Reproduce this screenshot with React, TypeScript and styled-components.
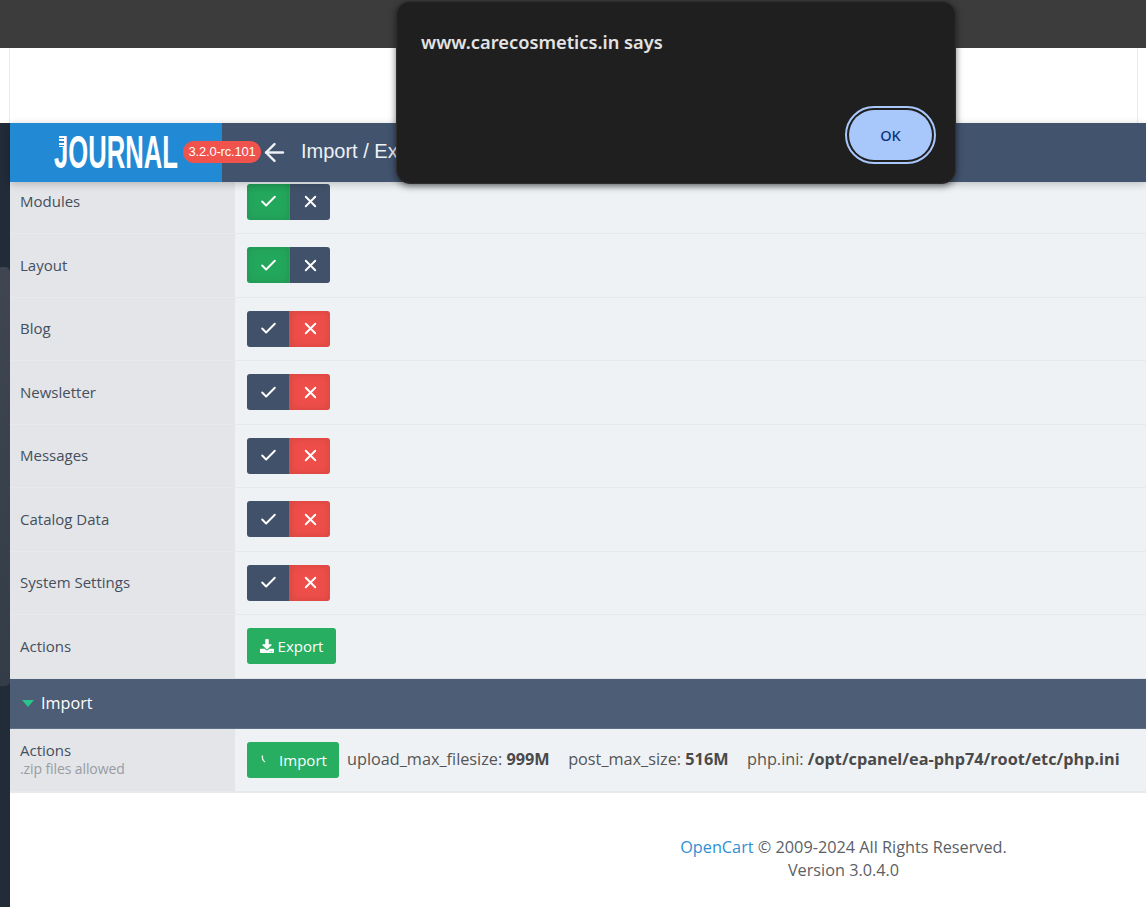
import React from "react";
import styled, { createGlobalStyle } from "styled-components";
import { ArrowLeft, Check, X } from "lucide-react";
import { FaDownload } from "react-icons/fa";

const GlobalStyle = createGlobalStyle`
  html, body {
    margin: 0;
    padding: 0;
    height: 100%;
    background: #fff;
    overflow: hidden;
  }
  body {
    font-family: "Open Sans", "Noto Sans", sans-serif;
    font-size: 15px;
    color: #4a5568;
  }
`;

const Page = styled.div`
  position: relative;
  width: 1146px;
  height: 907px;
  overflow: hidden;
`;

const TopBar = styled.div`
  height: 48px;
  background: #3c3c3c;
`;

const Body = styled.div`
  display: flex;
  height: 859px;
`;

const LeftRail = styled.div`
  position: relative;
  width: 10px;
  flex: none;
  margin-top: 75px;
  background: #222b38;
`;

const RailThumb = styled.div`
  position: absolute;
  top: 144px;
  left: 0;
  width: 10px;
  height: 419px;
  border-radius: 0 5px 5px 0;
  background: linear-gradient(#3f4651, #343c48);
`;

const Main = styled.div`
  flex: 1;
  min-width: 0;
`;

const WhiteBand = styled.div`
  height: 75px;
  margin-left: -1px;
  background: #fff;
  border-left: 1px solid #ececec;
  position: relative;

  &::after {
    content: "";
    position: absolute;
    top: 0;
    right: 8px;
    width: 1px;
    height: 100%;
    background: #ececec;
  }
`;

const Header = styled.header`
  position: relative;
  z-index: 2;
  display: flex;
  align-items: center;
  height: 59px;
  background: #42536d;
  box-shadow: 0 2px 8px rgba(0, 0, 0, 0.22);
`;

const LogoBox = styled.div`
  position: relative;
  width: 212px;
  height: 100%;
  flex: none;
  background: #228ad4;

  /* the striped top of the J in the logo */
  &::before {
    content: "";
    position: absolute;
    z-index: 1;
    left: 49px;
    top: 13px;
    width: 5px;
    height: 11px;
    background: repeating-linear-gradient(
      #fff 0 2px,
      #228ad4 2px 3.5px
    );
  }
`;

const LogoText = styled.div`
  position: absolute;
  left: 44px;
  top: 5px;
  font-family: "Liberation Sans", Arial, sans-serif;
  font-weight: 700;
  font-size: 47px;
  line-height: 48px;
  color: #fff;
  transform: scaleX(0.545);
  transform-origin: left center;
  white-space: nowrap;
`;

const VersionBadge = styled.span`
  position: absolute;
  left: 173px;
  top: 18px;
  width: 78px;
  height: 22px;
  border-radius: 11px;
  background: #f0524c;
  color: #fff;
  font-family: "Liberation Sans", Arial, sans-serif;
  font-size: 13px;
  line-height: 22px;
  text-align: center;
  letter-spacing: -0.2px;
  z-index: 1;
`;

const BackLink = styled.span`
  display: flex;
  margin-left: 38px;
  margin-right: 1px;
  margin-top: -1px;
  color: #eef1f5;
`;

const Title = styled.h1`
  margin: -2px 0 0 11px;
  font-family: "Liberation Sans", Arial, sans-serif;
  font-weight: 400;
  font-size: 20px;
  color: #eef1f5;
`;

const Rows = styled.div`
  margin-top: -11.5px;
`;

const Row = styled.div<{ $last?: boolean }>`
  display: flex;
  height: ${(p) => (p.$last ? "64px" : "63.5px")};
  box-sizing: border-box;
  border-bottom: ${(p) => (p.$last ? "2px" : "1px")} solid #e7e9ec;
`;

const LabelCell = styled.div`
  width: 225px;
  flex: none;
  box-sizing: border-box;
  padding: 0 0 1px 10px;
  display: flex;
  flex-direction: column;
  justify-content: center;
  background: #e3e5e8;
  color: #454f5e;
`;

const SmallNote = styled.span`
  font-size: 14px;
  line-height: 18px;
  letter-spacing: -0.1px;
  color: #989ca3;
`;

const LabelMain = styled.span`
  line-height: 20px;
`;

const ValueCell = styled.div`
  flex: 1;
  display: flex;
  align-items: center;
  gap: 8px;
  padding-left: 12px;
  background: #eff2f5;
  white-space: nowrap;
`;

const Toggle = styled.div`
  display: flex;
  width: 83px;
  height: 36px;
  border-radius: 3px;
  overflow: hidden;
`;

const ToggleSide = styled.span<{ $tone: "green" | "red" | "navy"; $first?: boolean }>`
  display: flex;
  align-items: center;
  justify-content: center;
  color: #fff;
  width: ${(p) => (p.$first ? "43px" : "40px")};
  box-sizing: border-box;
  border-right: ${(p) => (p.$first ? "1px solid #6b7684" : "none")};
  background: ${(p) =>
    p.$tone === "green" ? "#23a75c" : p.$tone === "red" ? "#ee4e49" : "#405169"};
  box-shadow: ${(p) =>
    p.$tone === "navy" ? "none" : "inset 0 0 8px rgba(0, 0, 0, 0.12)"};
`;

const ActionButton = styled.button<{ $width: number }>`
  display: flex;
  align-items: center;
  justify-content: center;
  gap: 4px;
  width: ${(p) => p.$width}px;
  height: 36px;
  padding: 0;
  border: 0;
  border-radius: 3px;
  background: #27ae60;
  color: #fff;
  font: inherit;
  font-size: 15px;
`;

const ButtonLabel = styled.span`
  margin-left: 2px;
`;

const Limits = styled.div`
  display: flex;
  gap: 18.5px;
  margin-top: -1px;
  color: #555;
  font-size: 16.25px;

  b {
    font-weight: 700;
    color: #4a4a4a;
  }
`;

const SectionHeader = styled.div`
  display: flex;
  align-items: center;
  gap: 7px;
  height: 50.5px;
  margin-top: -0.5px;
  box-sizing: border-box;
  padding-left: 12px;
  background: #4c5d75;
  border-top: 1px solid #dfe2e6;
  border-bottom: 1px solid #5f6f85;
  color: #fff;
  font-size: 16.2px;
`;

const Caret = styled.span`
  width: 0;
  height: 0;
  border-left: 6px solid transparent;
  border-right: 6px solid transparent;
  border-top: 7px solid #2bc48a;
`;

const Footer = styled.footer`
  margin-top: 43.5px;
  padding-left: 531px;
  text-align: center;
  font-size: 16.25px;
  line-height: 23px;
  color: #5b5f66;

  a {
    color: #2f8fd3;
    text-decoration: none;
  }
`;

const Dialog = styled.div`
  position: absolute;
  z-index: 5;
  left: 396px;
  top: 1px;
  width: 560px;
  height: 183px;
  box-sizing: border-box;
  padding: 27px 24px 0;
  display: flex;
  flex-direction: column;
  border: 1px solid #2e2e2e;
  border-radius: 14px;
  background: #1f1f1f;
  box-shadow: 0 2px 7px rgba(0, 0, 0, 0.55);
`;

const DialogTitle = styled.div`
  font-family: "Noto Sans", "Open Sans", sans-serif;
  font-weight: 600;
  font-size: 18.3px;
  line-height: 26px;
  color: #e3e3e3;
`;

const DialogActions = styled.div`
  margin-top: auto;
  margin-bottom: 23px;
  display: flex;
  justify-content: flex-end;
`;

const OkButton = styled.button`
  width: 83px;
  height: 50px;
  margin-right: -1px;
  border: 0;
  border-radius: 25px;
  background: #a8c7fa;
  color: #0a3580;
  font-family: "Noto Sans", "Open Sans", sans-serif;
  font-weight: 500;
  font-size: 14.5px;
  outline: 2px solid #a8c7fa;
  outline-offset: 2px;
`;

const rows: { name: string; on: boolean }[] = [
  { name: "Modules", on: true },
  { name: "Layout", on: true },
  { name: "Blog", on: false },
  { name: "Newsletter", on: false },
  { name: "Messages", on: false },
  { name: "Catalog Data", on: false },
  { name: "System Settings", on: false },
];

const App = () => {
  return (
    <Page>
      <GlobalStyle />
      <TopBar />
      <Body>
        <LeftRail>
          <RailThumb />
        </LeftRail>
        <Main>
          <WhiteBand />
          <Header>
            <LogoBox>
              <LogoText>JOURNAL</LogoText>
              <VersionBadge>3.2.0-rc.101</VersionBadge>
            </LogoBox>
            <BackLink>
              <ArrowLeft size={29} strokeWidth={2} />
            </BackLink>
            <Title>Import / Export</Title>
          </Header>
          <Rows>
            {rows.map((row) => (
              <Row key={row.name}>
                <LabelCell>
                  <LabelMain>{row.name}</LabelMain>
                </LabelCell>
                <ValueCell>
                  <Toggle>
                    <ToggleSide $first $tone={row.on ? "green" : "navy"}>
                      <Check size={19} strokeWidth={2.4} />
                    </ToggleSide>
                    <ToggleSide $tone={row.on ? "navy" : "red"}>
                      <X size={19} strokeWidth={2.4} />
                    </ToggleSide>
                  </Toggle>
                </ValueCell>
              </Row>
            ))}
            <Row>
              <LabelCell>
                <LabelMain>Actions</LabelMain>
              </LabelCell>
              <ValueCell>
                <ActionButton $width={89}>
                  <FaDownload size={14} />
                  Export
                </ActionButton>
              </ValueCell>
            </Row>
          </Rows>
          <SectionHeader>
            <Caret />
            Import
          </SectionHeader>
          <Row $last>
            <LabelCell>
              <LabelMain>Actions</LabelMain>
              <SmallNote>.zip files allowed</SmallNote>
            </LabelCell>
            <ValueCell>
              <ActionButton $width={92}>
                <svg width="14" height="14" viewBox="0 0 14 14" fill="none">
                  <path
                    d="M3.5 2.5 C3 5 3.8 7.5 6 9"
                    stroke="#e8f6ee"
                    strokeWidth="1.4"
                  />
                </svg>
                <ButtonLabel>Import</ButtonLabel>
              </ActionButton>
              <Limits>
                <span>
                  upload_max_filesize: <b>999M</b>
                </span>
                <span>
                  post_max_size: <b>516M</b>
                </span>
                <span>
                  php.ini: <b>/opt/cpanel/ea-php74/root/etc/php.ini</b>
                </span>
              </Limits>
            </ValueCell>
          </Row>
          <Footer>
            <a href="#opencart">OpenCart</a> © 2009-2024 All Rights Reserved.
            <br />
            Version 3.0.4.0
          </Footer>
        </Main>
      </Body>
      <Dialog>
        <DialogTitle>www.carecosmetics.in says</DialogTitle>
        <DialogActions>
          <OkButton>OK</OkButton>
        </DialogActions>
      </Dialog>
    </Page>
  );
};

export default App;
